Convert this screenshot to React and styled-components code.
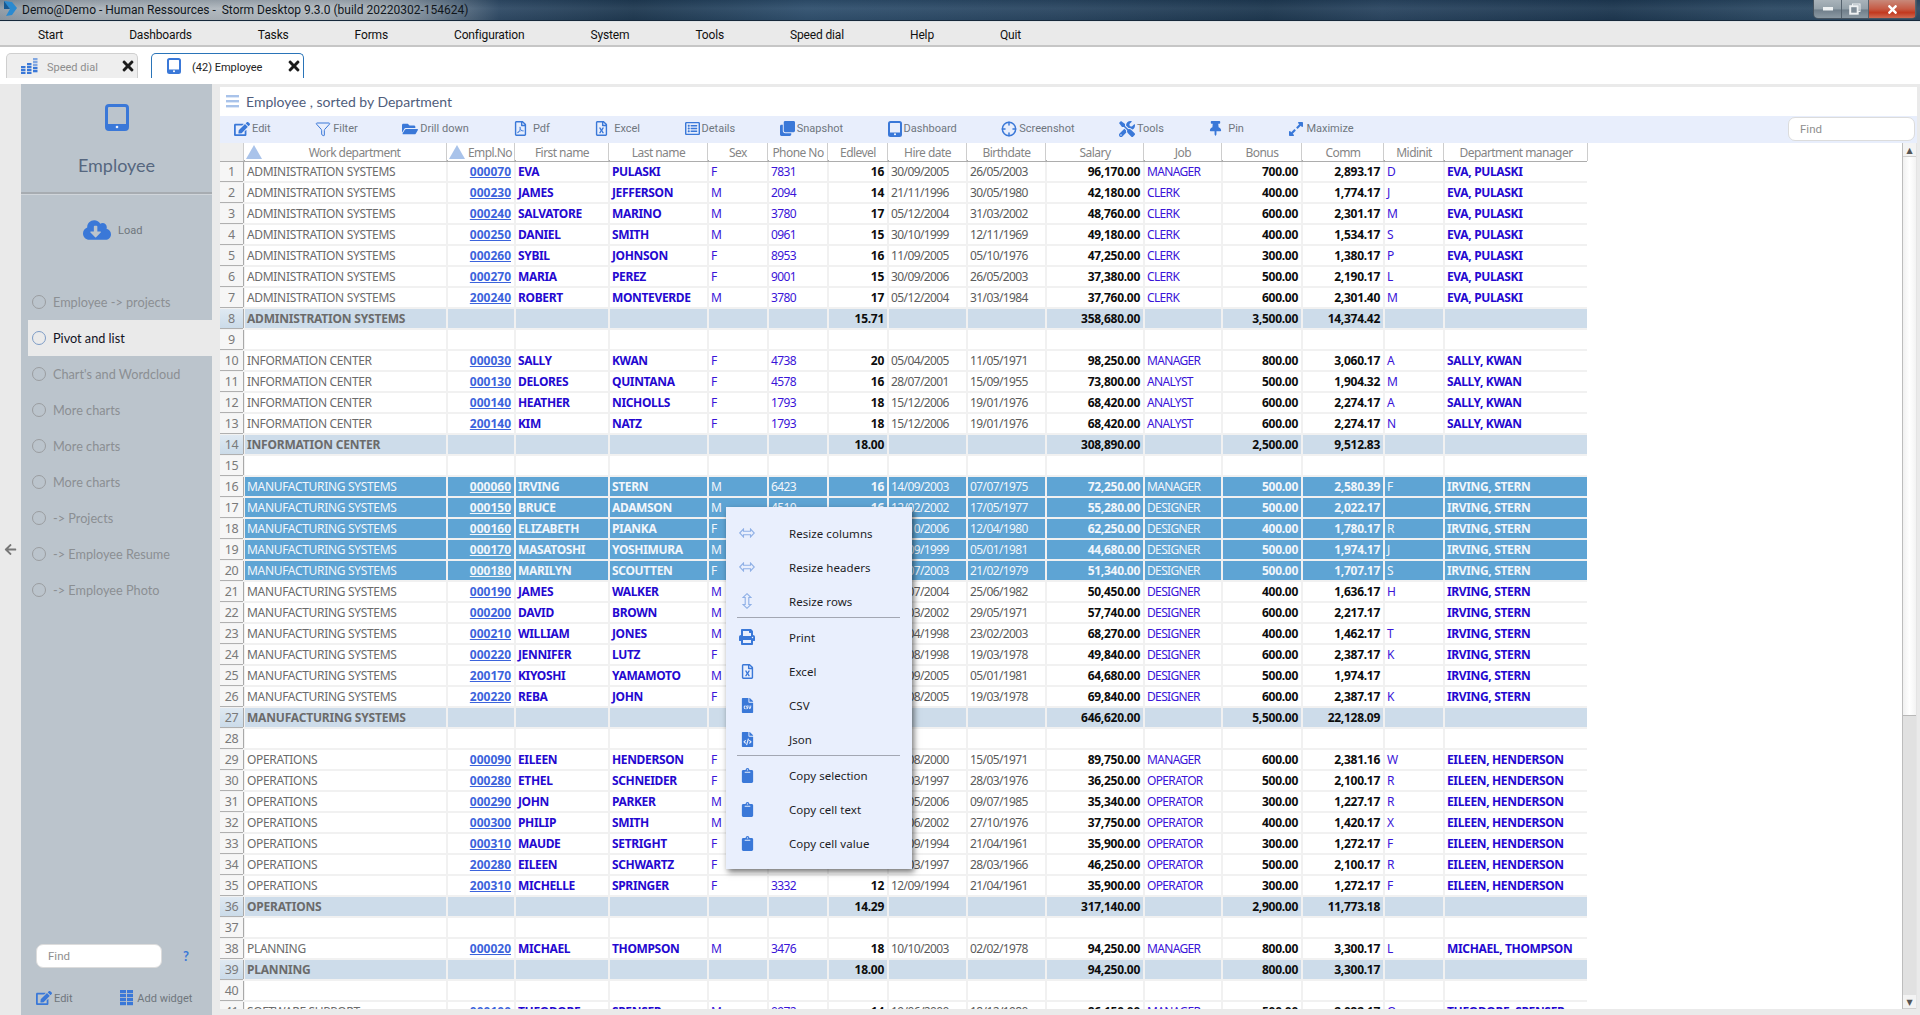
import React from 'react';
import styled, { createGlobalStyle } from 'styled-components';
import {
  FaEdit, FaFolderOpen, FaRegFilePdf, FaRegFileExcel, FaRegListAlt, FaClone, FaTools,
  FaThumbtack, FaExpandAlt, FaCloudDownloadAlt, FaPrint, FaFileCsv, FaClipboard, FaArrowLeft, FaFileCode, FaTimes,
} from 'react-icons/fa';
import { Funnel, Crosshair } from 'lucide-react';

const BLUE = '#3a78d8';
const UI_FONT = '"Noto Sans", "DejaVu Sans", sans-serif';
const NARROW_FONT = 'Roboto, "Noto Sans", sans-serif';

const Global = createGlobalStyle`
  html, body { margin: 0; padding: 0; height: 100%; overflow: hidden; background: #eaeaea; }
  * { box-sizing: border-box; }
  body { font-family: ${UI_FONT}; font-size: 12px; }
`;

const Page = styled.div`
  position: relative;
  width: 1920px;
  height: 1015px;
  display: flex;
  flex-direction: column;
  overflow: hidden;
`;

const TitleBar = styled.div`
  height: 22px;
  flex: none;
  display: flex;
  align-items: flex-start;
  padding-left: 3px;
  border-bottom: 1px solid #dfe3e6;
  box-shadow: inset 0 -1px 0 #16283a;
  background:
    linear-gradient(180deg, rgba(20,40,60,.18), rgba(255,255,255,.05) 40%, rgba(0,0,0,.06)),
    linear-gradient(90deg, #8f9ba6 0, #aab2b9 4%, #b3bac0 17%, #a4adb5 20%, #6d7f90 23%, #2f4a65 26%, #1f3951 33%, #30506e 42%, #2a4661 55%, #1e3850 66%, #2a4560 72%, #1d3750 84%, #2b4862 92%, #2d4a64 100%);
`;

const TitleText = styled.span`
  margin: 2px 0 0 5px;
  font-family: ${NARROW_FONT};
  font-size: 12px;
  line-height: 17px;
  color: #10161c;
  white-space: pre;
`;

const WindowControls = styled.div`
  margin-left: auto;
  margin-right: 3px;
  display: flex;
  height: 19px;
  border: 1px solid #46535f;
  border-top: 0;
  border-radius: 0 0 5px 5px;
  overflow: hidden;
`;

const WinButton = styled.div`
  width: ${p => p.$w}px;
  display: flex;
  align-items: center;
  justify-content: center;
  border-right: 1px solid #55626e;
  color: #fff;
  background: ${p => p.$close
    ? 'linear-gradient(180deg, #c8897a 0, #c65a44 50%, #c2391f 70%, #cf6a52 100%)'
    : 'linear-gradient(180deg, #a9b3ba 0, #93a0a9 50%, #6f7e8a 55%, #8c99a3 100%)'};
`;

const MenuBar = styled.nav`
  height: 25px;
  flex: none;
  display: flex;
  align-items: center;
  gap: 66px;
  padding: 2px 0 0 38px;
  background: #eaeaea;
  border-bottom: 2px solid #c6c6c6;
  font-family: ${NARROW_FONT};
  font-size: 12px;
  letter-spacing: -.15px;
  color: #111;
`;

const MenuItem = styled.span`
  white-space: nowrap;
`;

const TabRow = styled.div`
  height: 37px;
  flex: none;
  display: flex;
  align-items: flex-end;
  padding: 0 0 6px 6px;
  gap: 13px;
  background: #fff;
`;

const Tab = styled.div`
  height: 25px;
  width: ${p => p.$w}px;
  display: flex;
  align-items: center;
  padding-left: ${p => p.$pad}px;
  border: 1px solid ${p => (p.$active ? '#2a74b8' : '#cfcfcf')};
  border-bottom: 0;
  border-radius: 5px 5px 0 0;
  background: ${p => (p.$active ? '#fff' : '#eeeeee')};
  color: ${p => (p.$active ? '#222' : '#8d8d8d')};
  font-family: ${NARROW_FONT};
  font-size: 11px;
`;

const TabLabel = styled.span`
  margin: 2px 0 0 ${p => p.$gap}px;
  white-space: nowrap;
`;

const TabClose = styled.span`
  margin-left: auto;
  margin-right: 1px;
  display: flex;
  color: #1c1c1c;
`;

const Body = styled.div`
  flex: 1;
  min-height: 0;
  display: flex;
  background: #eaeaea;
`;

const Gutter = styled.div`
  width: 21px;
  flex: none;
  display: flex;
  align-items: center;
  justify-content: center;
  color: #777;
  padding-right: 1px;
`;

const Sidebar = styled.aside`
  width: 191px;
  flex: none;
  display: flex;
  flex-direction: column;
  background: #bbc4cc;
  font-family: Lato, "Noto Sans", sans-serif;
`;

const SideHead = styled.div`
  height: 110px;
  flex: none;
  padding-top: 20px;
  display: flex;
  flex-direction: column;
  align-items: center;
  border-bottom: 2px solid #a7acb1;
  box-shadow: 0 1px 0 #d0d5da;
`;

const SideTitle = styled.div`
  margin-top: 23px;
  font-size: 18px;
  line-height: 22px;
  color: #56677f;
`;

const LoadRow = styled.div`
  height: 24px;
  margin-top: 24px;
  padding-left: 62px;
  display: flex;
  align-items: center;
  gap: 7px;
  color: #6f767c;
  font-size: 11px;
  font-family: ${NARROW_FONT};
`;

const SideNav = styled.div`
  margin-top: 42px;
  margin-left: 7px;
  display: flex;
  flex-direction: column;
`;

const SideItem = styled.div`
  height: 36px;
  display: flex;
  align-items: center;
  gap: 7px;
  padding-left: 4px;
  font-size: 12.7px;
  white-space: nowrap;
  color: ${p => (p.$active ? '#12121f' : '#8b8f93')};
  background: ${p => (p.$active ? '#eaeaea' : 'transparent')};
`;

const Radio = styled.span`
  width: 14px;
  height: 14px;
  border-radius: 50%;
  border: 1.5px solid ${p => (p.$active ? '#7d9cc6' : '#9a9da0')};
`;

const SideFooter = styled.div`
  margin-top: auto;
  display: flex;
  flex-direction: column;
  padding: 0 0 9px 15px;
`;

const SearchRow = styled.div`
  display: flex;
  align-items: center;
`;

const FindInput = styled.input`
  width: ${p => p.$w || 126}px;
  height: 24px;
  flex: none;
  padding: 0 0 0 ${p => p.$pad || 11}px;
  border: 1px solid #dcdcdc;
  border-radius: 7px;
  background: #fff;
  outline: none;
  font: 11.5px ${NARROW_FONT};
  &::placeholder { color: #8f8f8f; opacity: 1; }
`;

const Help = styled.span`
  margin-left: 21px;
  color: ${BLUE};
  font-size: 13px;
  font-weight: 700;
`;

const SideActions = styled.div`
  margin-top: 22px;
  display: flex;
  align-items: center;
  font-family: ${NARROW_FONT};
`;

const SideAction = styled.span`
  display: flex;
  align-items: center;
  gap: 2px;
  margin-right: ${p => p.$mr || 0}px;
  color: #6f767c;
  font-size: 11px;
  white-space: nowrap;
`;

const Main = styled.main`
  flex: none;
  width: 1697px;
  margin: 3px 0 6px 8px;
  display: flex;
  flex-direction: column;
  background: #fff;
  min-height: 0;
`;

const Heading = styled.div`
  height: 29px;
  flex: none;
  display: flex;
  align-items: center;
  gap: 7px;
  padding-left: 6px;
  color: #4f5d7c;
  font-size: 14px;
  font-family: Lato, "Noto Sans", sans-serif;
`;

const Toolbar = styled.div`
  height: 27px;
  flex: none;
  display: flex;
  align-items: center;
  gap: 44.5px;
  padding: 0 2px 2px 14px;
  background: #e8eefc;
`;

const ToolButton = styled.span`
  display: flex;
  align-items: center;
  gap: 2px;
  font-family: ${NARROW_FONT};
  font-size: 11px;
  color: #6f767e;
  white-space: pre;
`;

const ToolFind = styled.div`
  margin-left: auto;
`;

const GridArea = styled.div`
  flex: 1;
  min-height: 0;
  display: flex;
`;

const Scroller = styled.div`
  flex: 1;
  min-width: 0;
  overflow: hidden;
  font-size: 12px;
`;

const COLUMNS = '23px 201px 66px 92px 97px 58px 58px 58px 77px 77px 96px 76px 78px 80px 58px 142px';

const HeadRow = styled.div`
  display: grid;
  grid-template-columns: ${COLUMNS};
  column-gap: 2px;
  width: 1367px;
  height: 19px;
  border-bottom: 2px solid #adadad;
`;

const HeadCell = styled.div`
  display: flex;
  align-items: center;
  justify-content: center;
  position: relative;
  color: #858585;
  letter-spacing: -.55px;
  white-space: nowrap;
  background: ${p => (p.$corner ? '#efefef' : '#fff')};
  box-shadow: 1px 0 0 #cdcdcd;
`;

const HeadLabel = styled.span`
  flex: 1;
  text-align: center;
  line-height: 17px;
  padding-top: 1px;
`;

const SortMark = styled.span`
  flex: none;
  margin-left: 1px;
  margin-right: 1px;
  width: 0;
  height: 0;
  border-left: 8px solid transparent;
  border-right: 8px solid transparent;
  border-bottom: 14px solid #a9c3ea;
`;

const Row = styled.div`
  display: grid;
  grid-template-columns: ${COLUMNS};
  column-gap: 2px;
  width: 1367px;
  height: 21px;
  padding-bottom: 2px;
  background: #f1f1f1;
`;

const NumCell = styled.div`
  display: flex;
  align-items: center;
  justify-content: center;
  color: #7a7a7a;
  font-size: 12.5px;
  letter-spacing: -.4px;
  background: ${p => (p.$sum ? 'linear-gradient(180deg,#dfe9f2,#cbdbe9)' : '#f6f6f6')};
  box-shadow: 1px 0 0 #a9a9a9, 0 1px 0 #b0b0b0;
`;

const kindColor = {
  text: '#6b6b6b', link: '#3c63dc', strong: '#2408d0', blue: '#3a14d8', num: '#0c0c0c', date: '#5b5b5b',
};

const kindSpacing = {
  text: -0.32, link: 0, strong: -0.35, blue: -0.65, num: -0.28, date: -0.6,
};

const Cell = styled.div`
  min-width: 0;
  display: flex;
  align-items: center;
  justify-content: ${p => (p.$right ? 'flex-end' : 'flex-start')};
  padding: 0 3px 0 2px;
  line-height: 19px;
  white-space: nowrap;
  overflow: hidden;
  letter-spacing: ${p => (p.$kind === 'text' && p.$bold ? -0.2 : kindSpacing[p.$kind])}px;
  font-weight: ${p => (p.$bold ? 700 : 400)};
  text-decoration: ${p => (p.$under ? 'underline' : 'none')};
  color: ${p => (p.$tone === 'sel' ? '#f2f6fb' : kindColor[p.$kind])};
  background: ${p => (p.$tone === 'sel' ? '#5ea4d4' : p.$tone === 'sum' ? '#cddcea' : '#fff')};
`;

const Scrollbar = styled.div`
  width: 15px;
  flex: none;
  display: flex;
  flex-direction: column;
  border-left: 1px solid #bdbdbd;
  border-right: 1px solid #e4e4e4;
  background: #e1e1e1;
`;

const ScrollButton = styled.div`
  height: 14px;
  flex: none;
  display: flex;
  align-items: center;
  justify-content: center;
  background: #f3f3f3;
  border-bottom: 1px solid #d0d0d0;
  color: #555;
  font-size: 8px;
  line-height: 1;
`;

const ScrollThumb = styled.div`
  height: 559px;
  flex: none;
  background: linear-gradient(90deg, #f1f1f1, #fff 50%, #f3f3f3);
  border-bottom: 1px solid #b8b8b8;
`;

const ScrollSpace = styled.div`
  flex: 1;
`;

const ContextMenu = styled.div`
  position: absolute;
  left: 726px;
  top: 507px;
  width: 186px;
  height: 362px;
  padding: 9px 0 0;
  background: #e9effd;
  box-shadow: 2px 3px 6px rgba(0,0,0,.55);
  display: flex;
  flex-direction: column;
`;

const MenuRow = styled.div`
  height: 34px;
  flex: none;
  display: flex;
  align-items: center;
  color: #1d1d25;
  font-size: 11.5px;
  letter-spacing: .05px;
  white-space: nowrap;
`;

const MenuIcon = styled.span`
  width: 63px;
  flex: none;
  display: flex;
  justify-content: center;
  padding-right: 21px;
  color: ${p => (p.$pale ? '#8fb0e6' : BLUE)};
`;

const MenuRule = styled.div`
  height: 1px;
  flex: none;
  margin: -1px 12px 2px 11px;
  background: #a3a7b3;
`;

const Device = () => (
  <svg width="24" height="27" viewBox="0 0 24 27">
    <rect x="1.5" y="1.5" width="21" height="24" rx="2.5" fill="none" stroke={BLUE} strokeWidth="3" />
    <rect x="1" y="20" width="22" height="6" rx="2" fill={BLUE} />
    <circle cx="12" cy="23" r="1.3" fill="#e8eefc" />
  </svg>
);

const SmallDevice = ({ size = 16 }) => (
  <svg width={size * 0.875} height={size} viewBox="0 0 14 16">
    <rect x="1" y="1" width="12" height="14" rx="1.5" fill="none" stroke={BLUE} strokeWidth="2" />
    <rect x="1" y="11.5" width="12" height="3.5" fill={BLUE} />
    <circle cx="7" cy="13.3" r="1" fill="#fff" />
  </svg>
);

const SpeedIcon = () => (
  <svg width="17" height="16" viewBox="0 0 17 16" fill={BLUE}>
    {[[0,[8,11,14]],[6,[8,11,14]],[12,[0,3,6,9,12]]].map(([x, ys]) =>
      ys.map(y => <rect key={`${x}-${y}`} x={x} y={y} width="4.5" height="2.3" opacity={x === 12 && y < 7 ? 0.6 : 1} />))}
    <rect x="6" y="5" width="4.5" height="2.3" />
  </svg>
);

const Hamburger = () => (
  <svg width="13" height="13" viewBox="0 0 13 13" fill="#a9c3ea">
    <rect y="0" width="13" height="2.4" /><rect y="5" width="13" height="2.4" /><rect y="10" width="13" height="2.4" />
  </svg>
);

const WidgetIcon = () => (
  <svg width="13" height="16" viewBox="0 0 13 16" fill={BLUE}>
    {[0, 4, 8, 12].map(y => [0, 7].map(x => <rect key={`${x}${y}`} x={x} y={y} width="6" height="3.2" />))}
  </svg>
);

const Logo = () => (
  <svg width="14" height="17" viewBox="0 0 14 17">
    <path d="M1 1 L9 2 L14 8 L9 15 L3 16 L7 9 Z" fill="#2a8ad0" />
    <path d="M1 1 L7 9 L1 9 Z" fill="#155a94" />
  </svg>
);

const HArrows = () => (
  <svg width="16" height="10" viewBox="0 0 16 10" fill="none" stroke="#8fb0e6" strokeWidth="1.1">
    <path d="M.7 5 L4.5 1 V3.2 H11.5 V1 L15.3 5 L11.5 9 V6.8 H4.5 V9 Z" />
  </svg>
);

const VArrows = () => (
  <svg width="10" height="16" viewBox="0 0 10 16" fill="none" stroke="#8fb0e6" strokeWidth="1.1">
    <path d="M5 .7 L9 4.5 H6.8 V11.5 H9 L5 15.3 L1 11.5 H3.2 V4.5 H1 Z" />
  </svg>
);

const MinimizeGlyph = () => <svg width="10" height="4"><rect width="10" height="3.5" fill="#eef1f3" /></svg>;
const RestoreGlyph = () => (
  <svg width="12" height="12" viewBox="0 0 12 12" fill="none" stroke="#eef1f3">
    <rect x="3.5" y="1" width="7.5" height="7.5" />
    <rect x="1.2" y="3.2" width="7.5" height="7.5" strokeWidth="2" fill="#7f8c97" />
  </svg>
);

const Tools = [
  [<FaEdit size={16} color={BLUE} />, 'Edit'],
  [<Funnel size={16} color={BLUE} strokeWidth={1.5} />, 'Filter'],
  [<FaFolderOpen size={16} color={BLUE} />, 'Drill down'],
  [<FaRegFilePdf size={15} color={BLUE} />, ' Pdf'],
  [<FaRegFileExcel size={15} color={BLUE} />, ' Excel'],
  [<FaRegListAlt size={15} color={BLUE} />, 'Details'],
  [<FaClone size={15} color={BLUE} />, 'Snapshot'],
  [<SmallDevice />, 'Dashboard'],
  [<Crosshair size={16} color={BLUE} strokeWidth={2.2} />, 'Screenshot'],
  [<FaTools size={16} color={BLUE} />, 'Tools'],
  [<FaThumbtack size={15} color={BLUE} />, ' Pin'],
  [<FaExpandAlt size={16} color={BLUE} />, 'Maximize'],
];

const HEADERS = ['Work department', 'Empl.No', 'First name', 'Last name', 'Sex', 'Phone No', 'Edlevel', 'Hire date', 'Birthdate', 'Salary', 'Job', 'Bonus', 'Comm', 'Midinit', 'Department manager'];

const KINDS = [
  ['text'], ['link', 'right', 'bold', 'under'], ['strong', 'bold'], ['strong', 'bold'], ['blue'], ['blue'],
  ['num', 'right', 'bold'], ['date'], ['date'], ['num', 'right', 'bold'], ['blue'], ['num', 'right', 'bold'], ['num', 'right', 'bold'], ['blue'], ['strong', 'bold'],
];

const A = 'ADMINISTRATION SYSTEMS', I = 'INFORMATION CENTER', M = 'MANUFACTURING SYSTEMS', O = 'OPERATIONS', P = 'PLANNING';
const EP = 'EVA, PULASKI', SK = 'SALLY, KWAN', IS = 'IRVING, STERN', EH = 'EILEEN, HENDERSON';

const d = (...cells) => ({ cells });
const sel = (...cells) => ({ cells, tone: 'sel' });
const sum = (dept, ed, sal, bon, com) => ({ tone: 'sum', cells: [dept, '', '', '', '', '', ed, '', '', sal, '', bon, com, '', ''] });
const empty = () => ({ cells: Array(15).fill('') });

const ROWS = [
  d(A,'000070','EVA','PULASKI','F','7831','16','30/09/2005','26/05/2003','96,170.00','MANAGER','700.00','2,893.17','D',EP),
  d(A,'000230','JAMES','JEFFERSON','M','2094','14','21/11/1996','30/05/1980','42,180.00','CLERK','400.00','1,774.17','J',EP),
  d(A,'000240','SALVATORE','MARINO','M','3780','17','05/12/2004','31/03/2002','48,760.00','CLERK','600.00','2,301.17','M',EP),
  d(A,'000250','DANIEL','SMITH','M','0961','15','30/10/1999','12/11/1969','49,180.00','CLERK','400.00','1,534.17','S',EP),
  d(A,'000260','SYBIL','JOHNSON','F','8953','16','11/09/2005','05/10/1976','47,250.00','CLERK','300.00','1,380.17','P',EP),
  d(A,'000270','MARIA','PEREZ','F','9001','15','30/09/2006','26/05/2003','37,380.00','CLERK','500.00','2,190.17','L',EP),
  d(A,'200240','ROBERT','MONTEVERDE','M','3780','17','05/12/2004','31/03/1984','37,760.00','CLERK','600.00','2,301.40','M',EP),
  sum(A,'15.71','358,680.00','3,500.00','14,374.42'),
  empty(),
  d(I,'000030','SALLY','KWAN','F','4738','20','05/04/2005','11/05/1971','98,250.00','MANAGER','800.00','3,060.17','A',SK),
  d(I,'000130','DELORES','QUINTANA','F','4578','16','28/07/2001','15/09/1955','73,800.00','ANALYST','500.00','1,904.32','M',SK),
  d(I,'000140','HEATHER','NICHOLLS','F','1793','18','15/12/2006','19/01/1976','68,420.00','ANALYST','600.00','2,274.17','A',SK),
  d(I,'200140','KIM','NATZ','F','1793','18','15/12/2006','19/01/1976','68,420.00','ANALYST','600.00','2,274.17','N',SK),
  sum(I,'18.00','308,890.00','2,500.00','9,512.83'),
  empty(),
  sel(M,'000060','IRVING','STERN','M','6423','16','14/09/2003','07/07/1975','72,250.00','MANAGER','500.00','2,580.39','F',IS),
  sel(M,'000150','BRUCE','ADAMSON','M','4510','16','12/02/2002','17/05/1977','55,280.00','DESIGNER','500.00','2,022.17','',IS),
  sel(M,'000160','ELIZABETH','PIANKA','F','3782','17','11/10/2006','12/04/1980','62,250.00','DESIGNER','400.00','1,780.17','R',IS),
  sel(M,'000170','MASATOSHI','YOSHIMURA','M','2890','16','15/09/1999','05/01/1981','44,680.00','DESIGNER','500.00','1,974.17','J',IS),
  sel(M,'000180','MARILYN','SCOUTTEN','F','1682','17','07/07/2003','21/02/1979','51,340.00','DESIGNER','500.00','1,707.17','S',IS),
  d(M,'000190','JAMES','WALKER','M','2986','16','26/07/2004','25/06/1982','50,450.00','DESIGNER','400.00','1,636.17','H',IS),
  d(M,'000200','DAVID','BROWN','M','4501','16','03/03/2002','29/05/1971','57,740.00','DESIGNER','600.00','2,217.17','',IS),
  d(M,'000210','WILLIAM','JONES','M','0942','17','11/04/1998','23/02/2003','68,270.00','DESIGNER','400.00','1,462.17','T',IS),
  d(M,'000220','JENNIFER','LUTZ','F','0672','18','29/08/1998','19/03/1978','49,840.00','DESIGNER','600.00','2,387.17','K',IS),
  d(M,'200170','KIYOSHI','YAMAMOTO','M','2890','16','15/09/2005','05/01/1981','64,680.00','DESIGNER','500.00','1,974.17','',IS),
  d(M,'200220','REBA','JOHN','F','0672','18','29/08/2005','19/03/1978','69,840.00','DESIGNER','600.00','2,387.17','K',IS),
  sum(M,'16.45','646,620.00','5,500.00','22,128.09'),
  empty(),
  d(O,'000090','EILEEN','HENDERSON','F','5498','16','15/08/2000','15/05/1971','89,750.00','MANAGER','600.00','2,381.16','W',EH),
  d(O,'000280','ETHEL','SCHNEIDER','F','8997','17','28/03/1997','28/03/1976','36,250.00','OPERATOR','500.00','2,100.17','R',EH),
  d(O,'000290','JOHN','PARKER','M','4502','12','30/05/2006','09/07/1985','35,340.00','OPERATOR','300.00','1,227.17','R',EH),
  d(O,'000300','PHILIP','SMITH','M','2095','14','19/06/2002','27/10/1976','37,750.00','OPERATOR','400.00','1,420.17','X',EH),
  d(O,'000310','MAUDE','SETRIGHT','F','3332','12','12/09/1994','21/04/1961','35,900.00','OPERATOR','300.00','1,272.17','F',EH),
  d(O,'200280','EILEEN','SCHWARTZ','F','8997','17','28/03/1997','28/03/1966','46,250.00','OPERATOR','500.00','2,100.17','R',EH),
  d(O,'200310','MICHELLE','SPRINGER','F','3332','12','12/09/1994','21/04/1961','35,900.00','OPERATOR','300.00','1,272.17','F',EH),
  sum(O,'14.29','317,140.00','2,900.00','11,773.18'),
  empty(),
  d(P,'000020','MICHAEL','THOMPSON','M','3476','18','10/10/2003','02/02/1978','94,250.00','MANAGER','800.00','3,300.17','L','MICHAEL, THOMPSON'),
  sum(P,'18.00','94,250.00','800.00','3,300.17'),
  empty(),
  d('SOFTWARE SUPPORT','000100','THEODORE','SPENSER','M','0972','14','19/06/2000','18/12/1980','86,150.00','MANAGER','500.00','2,092.17','Q','THEODORE, SPENSER'),
];

const SIDE_ITEMS = ['Employee -> projects', 'Pivot and list', "Chart's and Wordcloud", 'More charts', 'More charts', 'More charts', '-> Projects', '-> Employee Resume', '-> Employee Photo'];
const TOP_MENU = ['Start', 'Dashboards', 'Tasks', 'Forms', 'Configuration', 'System', 'Tools', 'Speed dial', 'Help', 'Quit'];

const MENU_GROUPS = [
  [[<HArrows />, 'Resize columns', true], [<HArrows />, 'Resize headers', true], [<VArrows />, 'Resize rows', true]],
  [[<FaPrint size={16} />, 'Print'], [<FaRegFileExcel size={15} />, 'Excel'], [<FaFileCsv size={15} />, 'CSV'], [<FaFileCode size={15} />, 'Json']],
  [[<FaClipboard size={15} />, 'Copy selection'], [<FaClipboard size={15} />, 'Copy cell text'], [<FaClipboard size={15} />, 'Copy cell value']],
];

export default function App() {
  return (
    <Page>
      <Global />
      <TitleBar>
        <Logo />
        <TitleText>Demo@Demo - Human Ressources -  Storm Desktop 9.3.0 (build 20220302-154624)</TitleText>
        <WindowControls>
          <WinButton $w={28}><MinimizeGlyph /></WinButton>
          <WinButton $w={27}><RestoreGlyph /></WinButton>
          <WinButton $w={47} $close><FaTimes size={13} /></WinButton>
        </WindowControls>
      </TitleBar>
      <MenuBar>
        {TOP_MENU.map(m => <MenuItem key={m}>{m}</MenuItem>)}
      </MenuBar>
      <TabRow>
        <Tab $w={132} $pad={14}>
          <SpeedIcon />
          <TabLabel $gap={9}>Speed dial</TabLabel>
          <TabClose><FaTimes size={16} /></TabClose>
        </Tab>
        <Tab $w={153} $active $pad={15}>
          <SmallDevice />
          <TabLabel $gap={11}>(42) Employee</TabLabel>
          <TabClose><FaTimes size={16} /></TabClose>
        </Tab>
      </TabRow>
      <Body>
        <Gutter><FaArrowLeft size={13} /></Gutter>
        <Sidebar>
          <SideHead>
            <Device />
            <SideTitle>Employee</SideTitle>
          </SideHead>
          <LoadRow>
            <FaCloudDownloadAlt size={28} color={BLUE} />
            Load
          </LoadRow>
          <SideNav>
            {SIDE_ITEMS.map((s, i) => (
              <SideItem key={i} $active={i === 1}>
                <Radio $active={i === 1} />
                {s}
              </SideItem>
            ))}
          </SideNav>
          <SideFooter>
            <SearchRow>
              <FindInput placeholder="Find" />
              <Help>?</Help>
            </SearchRow>
            <SideActions>
              <SideAction $mr={47}><FaEdit size={16} color={BLUE} />Edit</SideAction>
              <SideAction><WidgetIcon />&nbsp;Add widget</SideAction>
            </SideActions>
          </SideFooter>
        </Sidebar>
        <Main>
          <Heading><Hamburger />Employee , sorted by Department</Heading>
          <Toolbar>
            {Tools.map(([icon, label]) => <ToolButton key={label}>{icon}{label}</ToolButton>)}
            <ToolFind><FindInput $w={127} $pad={11} placeholder="Find" /></ToolFind>
          </Toolbar>
          <GridArea>
            <Scroller>
              <HeadRow>
                <HeadCell $corner />
                {HEADERS.map((h, i) => (
                  <HeadCell key={h}>
                    {i < 2 && <SortMark />}
                    <HeadLabel>{h}</HeadLabel>
                  </HeadCell>
                ))}
              </HeadRow>
              {ROWS.map((r, i) => (
                <Row key={i}>
                  <NumCell $sum={r.tone === 'sum'}>{i + 1}</NumCell>
                  {r.cells.map((c, j) => {
                    const k = KINDS[j];
                    const bold = k.includes('bold') || (r.tone === 'sum' && j === 0);
                    return (
                      <Cell key={j} $kind={k[0]} $right={k.includes('right')} $bold={bold} $under={k.includes('under')} $tone={r.tone}>
                        {c}
                      </Cell>
                    );
                  })}
                </Row>
              ))}
            </Scroller>
            <Scrollbar>
              <ScrollButton>▲</ScrollButton>
              <ScrollThumb />
              <ScrollSpace />
              <ScrollButton>▼</ScrollButton>
            </Scrollbar>
          </GridArea>
        </Main>
      </Body>
      <ContextMenu>
        {MENU_GROUPS.map((group, gi) => (
          <React.Fragment key={gi}>
            {gi > 0 && <MenuRule />}
            {group.map(([icon, label, pale]) => (
              <MenuRow key={label}>
                <MenuIcon $pale={pale}>{icon}</MenuIcon>
                {label}
              </MenuRow>
            ))}
          </React.Fragment>
        ))}
      </ContextMenu>
    </Page>
  );
}
